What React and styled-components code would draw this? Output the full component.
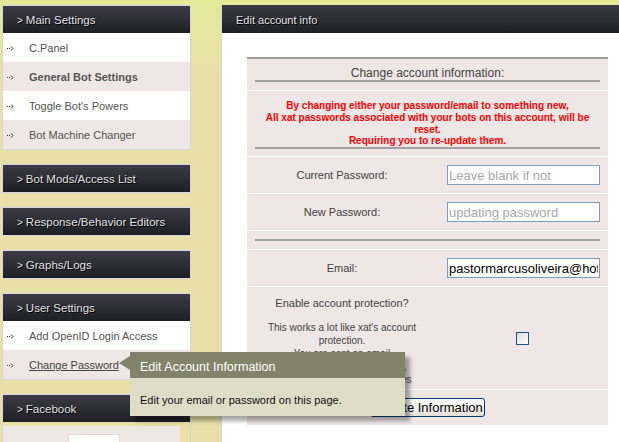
import React from 'react'
import styled, { createGlobalStyle } from 'styled-components'

const GlobalStyle = createGlobalStyle`
body{
  margin:0;
  overflow:hidden;
  background: linear-gradient(#e2ea98 0px, #e5e6a0 30px, #e8e0a8 70px) no-repeat, #e8e0a8;
  font-family: "Liberation Sans", Arial, sans-serif;
}
`

const Page = styled.div`
display:flex;
align-items:flex-start;
gap:30px;
width:680px;
height:442px;
padding:5px 0 0 2px;
box-sizing:border-box;
`

const Sidebar = styled.div`
width:189px;
flex:none;
`

const Box = styled.div`
border:1px solid #d4d4e6;
margin-bottom:14px;
`

const Header = styled.div`
height:27px;
display:flex;
align-items:center;
padding:1px 0 0 14px;
box-sizing:border-box;
background: linear-gradient(#3c3b45 0%, #2c2c33 55%, #1d2023 100%);
color:#e2e2e2;
font-size:11.5px;
text-shadow:1px 1px 0 #000;
white-space:nowrap;

span{
  font-size:10px;
  margin-right:3px;
}
`

const Item = styled.div`
position:relative;
height:29px;
display:flex;
align-items:center;
padding:1px 0 0 4px;
box-sizing:border-box;
background:${p => p.$alt ? '#efe6e6' : '#fff'};
color:#555;
font-size:11px;
font-weight:${p => p.$bold ? 'bold' : 'normal'};

a{
  color:#444;
  text-decoration:underline;
}
`

const ItemArrow = styled.svg`
width:7px;
height:5px;
margin-right:15px;
flex:none;
`

const FbBody = styled.div`
padding:4px 10px 0 0;
`

const FbInner = styled.div`
height:30px;
background:#efe6e6;
padding:8px 0 0 65px;
box-sizing:border-box;

div{
  width:50px;
  height:22px;
  background:#fff;
  border:1px solid #ddd;
}
`

const Tooltip = styled.div`
position:absolute;
left:127px;
top:2px;
width:275px;
z-index:10;
box-shadow:5px 5px 4px rgba(0,0,0,0.35);

&::before{
  content:'';
  position:absolute;
  left:-11px;
  top:4px;
  border-style:solid;
  border-width:7px 11px 7px 0;
  border-color:transparent #818468 transparent transparent;
}
`

const TipTitle = styled.div`
height:26px;
display:flex;
align-items:center;
padding:4px 0 0 10px;
box-sizing:border-box;
background:#818468;
color:#fff;
font-size:12.5px;
font-weight:normal;
`

const TipBody = styled.div`
height:38px;
display:flex;
align-items:center;
padding:6px 0 0 10px;
box-sizing:border-box;
background:#dedec8;
color:#111;
font-size:11px;
`

const Main = styled.div`
width:420px;
flex:none;
height:437px;
background:#fff;
border-left:1px solid #d6d6ea;
`

const MainHeader = styled(Header)`
height:28px;
font-size:11px;
`

const Content = styled.div`
padding:24px 0 0 25px;
`

const Form = styled.div`
width:361px;
border-top:2px solid #9c9c9c;
display:flex;
flex-direction:column;
gap:1px;
`

const Row = styled.div`
display:grid;
grid-template-columns:190px 1fr;
align-items:center;
background:#efe6e6;
height:${p => p.$h}px;
color:#444;
font-size:11px;
`

const Full = styled.div`
grid-column:1 / span 2;
text-align:center;
padding-top:${p => p.$pt || 0}px;
align-self:${p => p.$top ? 'start' : 'center'};
`

const Caption = styled.div`
font-size:12px;
line-height:13px;
padding-top:1px;
color:#444;
`

const Warning = styled.div`
color:#f00;
font-weight:bold;
font-size:10px;
line-height:11.8px;
padding-top:2px;
`

const Divider = styled.div`
margin:0 8px;
height:2px;
background:#a2a2a2;
`

const Label = styled.div`
text-align:center;
`

const Field = styled.div`
padding-left:10px;
`

const Input = styled.input`
width:153px;
height:20px;
box-sizing:border-box;
border:1px solid #7f9db9;
padding:0 1px;
font-family:"Liberation Sans", Arial, sans-serif;
font-size:13px;
color:#000;
background:#fff;
outline:none;

&::placeholder{
  color:#a8a8a8;
}
`

const Protection = styled.div`
align-self:start;
padding-top:10px;
text-align:center;
line-height:12px;

small{
  font-size:10px;
}
`

const Check = styled.span`
justify-self:center;
width:11px;
height:11px;
border:1px solid #1c5180;
background:linear-gradient(135deg, #dcdcd6, #fff);
`

const Button = styled.button`
justify-self:center;
height:19px;
padding:0 1px;
border:1px solid #003c74;
border-radius:3px;
background:linear-gradient(#fff, #f2f1ea 60%, #e3e1d6);
font-family:"Liberation Sans", Arial, sans-serif;
font-size:13px;
color:#000;
`

const Arrow = () => (
  <ItemArrow viewBox="0 0 7 5">
    <path d="M0 2.5h1M2 2.5h1M4 0.5l2 2-2 2" stroke="#333" strokeWidth="1" fill="none" />
  </ItemArrow>
)

const mainItems = ['C.Panel', 'General Bot Settings', "Toggle Bot's Powers", 'Bot Machine Changer']

const App = () => {
  return (
    <>
      <GlobalStyle />
      <Page>
        <Sidebar>
          <Box>
            <Header><span>&gt;</span>Main Settings</Header>
            {mainItems.map((t, i) => (
              <Item key={t} $alt={i % 2 === 1} $bold={i === 1}>
                <Arrow />{t}
              </Item>
            ))}
          </Box>
          <Box><Header><span>&gt;</span>Bot Mods/Access List</Header></Box>
          <Box><Header><span>&gt;</span>Response/Behavior Editors</Header></Box>
          <Box><Header><span>&gt;</span>Graphs/Logs</Header></Box>
          <Box>
            <Header><span>&gt;</span>User Settings</Header>
            <Item><Arrow />Add OpenID Login Access</Item>
            <Item $alt>
              <Arrow /><a>Change Password</a>
              <Tooltip>
                <TipTitle>Edit Account Information</TipTitle>
                <TipBody>Edit your email or password on this page.</TipBody>
              </Tooltip>
            </Item>
          </Box>
          <Box>
            <Header><span>&gt;</span>Facebook</Header>
            <FbBody>
              <FbInner><div /></FbInner>
            </FbBody>
          </Box>
        </Sidebar>

        <Main>
          <MainHeader>Edit account info</MainHeader>
          <Content>
            <Form>
              <Row $h={31}>
                <Full $top $pt={7}>
                  <Caption>Change account information:</Caption>
                  <Divider />
                </Full>
              </Row>
              <Row $h={65}>
                <Full $top $pt={7}>
                  <Warning>
                    By changing either your password/email to something new,<br />
                    All xat passwords associated with your bots on this account, will be<br />
                    reset.<br />
                    Requiring you to re-update them.
                  </Warning>
                  <Divider />
                </Full>
              </Row>
              <Row $h={36}>
                <Label>Current Password:</Label>
                <Field><Input type="text" placeholder="Leave blank if not" /></Field>
              </Row>
              <Row $h={36}>
                <Label>New Password:</Label>
                <Field><Input type="text" placeholder="updating password" /></Field>
              </Row>
              <Row $h={18}>
                <Full><Divider /></Full>
              </Row>
              <Row $h={36}>
                <Label>Email:</Label>
                <Field><Input type="text" defaultValue="pastormarcusoliveira@hotmail.com" /></Field>
              </Row>
              <Row $h={102}>
                <Protection>
                  Enable account protection?<br /><br />
                  <small>
                    This works a lot like xat's account<br />
                    protection.<br />
                    You are sent an email<br />
                    when someone that isn't you,<br />
                    tries to log in, or make changes
                  </small>
                </Protection>
                <Check />
              </Row>
              <Row $h={35}>
                <Full><Button>Update Information</Button></Full>
              </Row>
            </Form>
          </Content>
        </Main>
      </Page>
    </>
  )
}

export default App
